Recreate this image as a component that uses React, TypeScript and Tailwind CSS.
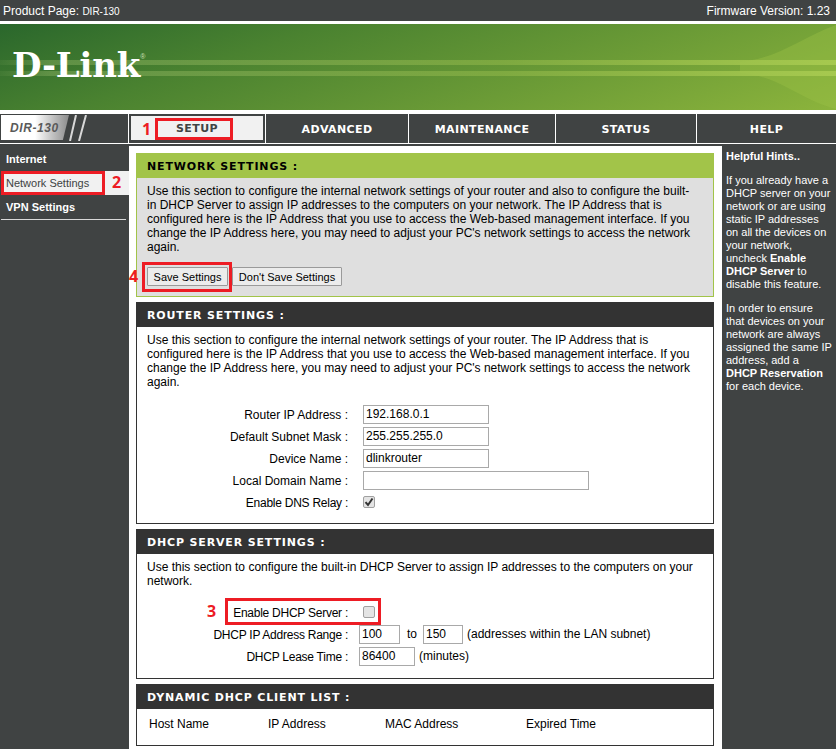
const bodyFont = "font-['Liberation_Sans',sans-serif] text-[12px] leading-[14px]"
const headFont = "font-['DejaVu_Sans',sans-serif] font-bold text-[11px] tracking-[0.85px]"
const navFont = "font-['DejaVu_Sans',sans-serif] font-bold text-[11px] tracking-[0.4px]"

function Banner() {
  return (
    <svg className="block w-full h-[86px]" viewBox="0 0 836 86" preserveAspectRatio="none">
      <defs>
        <linearGradient id="bg" x1="0" y1="0" x2="109" y2="328" gradientUnits="userSpaceOnUse">
          <stop offset="0" stopColor="#2a672c" />
          <stop offset="0.3" stopColor="#4a8230" />
          <stop offset="1" stopColor="#8cb43c" />
        </linearGradient>
        <linearGradient id="stripe" x1="0" y1="0" x2="836" y2="0" gradientUnits="userSpaceOnUse">
          <stop offset="0" stopColor="#8bb163" stopOpacity="0.1" />
          <stop offset="0.06" stopColor="#8bb163" stopOpacity="0.45" />
          <stop offset="0.6" stopColor="#8fb648" stopOpacity="0.6" />
          <stop offset="1" stopColor="#a6c94f" />
        </linearGradient>
      </defs>
      <rect width="836" height="86" fill="url(#bg)" />
      <path d="M740 38 C780 34 800 14 836 1 L836 85 C800 76 780 52 740 49 Z" fill="#9bc046" opacity="0.4" />
      <rect y="36" width="836" height="5" fill="url(#stripe)" />
      <rect y="47" width="836" height="5" fill="url(#stripe)" />
    </svg>
  )
}

function Logo() {
  return (
    <div className="absolute left-[12px] top-[21px] font-['DejaVu_Serif',serif] font-bold text-[34px] leading-[40px] text-white tracking-[-0.2px] flex">
      D-Link
      <span className="text-[7px] leading-[10px] mt-[7px] text-[#cfe0b8] font-['Liberation_Sans',sans-serif] font-normal tracking-normal">®</span>
    </div>
  )
}

function NavCell({ w, label }: { w: string; label: string }) {
  return (
    <div className={`${w} h-full pt-[3px] flex items-center justify-center border-l border-white text-white ${navFont}`}>
      {label}
    </div>
  )
}

function Panel({ title, children }: { title: string; children: React.ReactNode }) {
  return (
    <section className="h-full border border-[#333] bg-white">
      <h2 className={`h-[24px] bg-[#333] text-white pl-[10px] pt-[3px] flex items-center ${headFont}`}>{title}</h2>
      {children}
    </section>
  )
}

function Row({ label, tight, children }: { label: string; tight?: boolean; children: React.ReactNode }) {
  return (
    <div className="h-[22px] flex items-center">
      <span className={`w-[211px] pt-[1px] text-right text-[#000] whitespace-nowrap ${bodyFont} ${tight ? 'tracking-[-0.25px]' : ''}`}>{label}</span>
      <div className={`ml-[15px] flex items-center ${bodyFont}`}>{children}</div>
    </div>
  )
}

function Field({ value, w }: { value?: string; w: string }) {
  return (
    <input
      readOnly
      value={value ?? ''}
      className={`${w} h-[19px] border border-[#a9a9a9] bg-white px-[2px] text-[#000] outline-none ${bodyFont}`}
    />
  )
}

function Check({ checked }: { checked?: boolean }) {
  return (
    <span className="w-[12px] h-[12px] rounded-[2px] border border-[#a0a0a0] bg-[#e4e4e4] flex items-center justify-center">
      {checked && (
        <svg width="10" height="10" viewBox="0 0 10 10">
          <path d="M1.5 5.2 L4 8 L8.5 1.5" fill="none" stroke="#333" strokeWidth="2" />
        </svg>
      )}
    </span>
  )
}

function Button({ children, w }: { children: React.ReactNode; w: string }) {
  return (
    <button className={`${w} h-[19px] border border-[#9a9a9a] rounded-[1px] bg-[#ececec] text-[#000] text-center whitespace-nowrap font-['Liberation_Sans',sans-serif] text-[11px] leading-[14px]`}>
      {children}
    </button>
  )
}

export default function App() {
  return (
    <div className="relative w-[836px] h-[749px] overflow-hidden bg-white">
      {/* top bar */}
      <div className="h-[21px] bg-[#404343] text-white flex items-center justify-between pl-[3px] pr-[6px] font-['Liberation_Sans',sans-serif] text-[12px]">
        <span>
          Product Page: <span className="text-[10px]">DIR-130</span>
        </span>
        <span>Firmware Version: 1.23</span>
      </div>

      <div className="relative mt-[3px] h-[86px]">
        <Banner />
        <Logo />
      </div>

      {/* nav */}
      <nav className="mt-[4px] h-[29px] bg-[#404343] flex">
        <div className="relative w-[129px] h-full overflow-hidden border-r border-white">
          <div className="absolute left-[1px] top-[1px] h-[25px] w-[68px] bg-gradient-to-r from-white from-50% to-[#8c8c8c] [clip-path:polygon(0_0,100%_0,91%_100%,0_100%)] flex items-center pl-[9px] font-['Liberation_Sans',sans-serif] font-bold italic text-[12px] tracking-[0.6px] text-[#5a5a5a]">
            DIR-130
          </div>
          <svg className="absolute left-[68px] top-[1px]" width="22" height="26" viewBox="0 0 22 26">
            <path d="M8 0 L2 26 M18 0 L11 26" stroke="#d8d8d8" strokeWidth="2" />
          </svg>
        </div>
        <div className="w-[136px] h-full pt-[2px] px-[2px] pb-[3px]">
          <div className={`h-full bg-[#f1f1f1] text-[#404343] flex items-center justify-center pt-[3px] ${navFont}`}>
            SETUP
          </div>
        </div>
        <NavCell w="w-[143px]" label="ADVANCED" />
        <NavCell w="w-[147px]" label="MAINTENANCE" />
        <NavCell w="w-[141px]" label="STATUS" />
        <NavCell w="w-[140px]" label="HELP" />
      </nav>
      <div className="h-px bg-white" />
      <div className="h-[2px] bg-[#404343]" />

      <div className="flex h-[603px]">
        {/* left menu */}
        <aside className="w-[129px] shrink-0 bg-[#404343] text-white font-['Liberation_Sans',sans-serif] text-[11px] font-bold">
          <div className="pl-[6px] pt-[1px] h-[25px] flex items-center">Internet</div>
          <div className="pl-[5px] h-[24px] ml-[1px] bg-[#f1f1f1] text-[#404343] font-normal flex items-center">Network Settings</div>
          <div className="pl-[6px] h-[24px] flex items-center">VPN Settings</div>
          <div className="ml-[1px] mr-[3px] h-px bg-white/80" />
        </aside>

        {/* main */}
        <main className="w-[593px] shrink-0 bg-white pl-[7px] pr-[8px] pt-[7px] flex flex-col gap-[5px] text-[#000]">
          <section className="h-[144px] border border-[#a2c449] bg-[#dfdfdf]">
            <h1 className={`h-[24px] bg-[#a2c449] text-black pl-[10px] pt-[3px] flex items-center ${headFont}`}>NETWORK SETTINGS :</h1>
            <p className={`px-[10px] pt-[6px] whitespace-nowrap ${bodyFont}`}>
              Use this section to configure the internal network settings of your router and also to configure the built-<br />
              in DHCP Server to assign IP addresses to the computers on your network. The IP Address that is<br />
              configured here is the IP Address that you use to access the Web-based management interface. If you<br />
              change the IP Address here, you may need to adjust your PC's network settings to access the network<br />
              again.
            </p>
            <div className="pl-[10px] pt-[13px] flex gap-[4px]">
              <Button w="w-[81px]">Save Settings</Button>
              <Button w="w-[110px]">Don't Save Settings</Button>
            </div>
          </section>

          <div className="h-[222px]">
            <Panel title="ROUTER SETTINGS :">
              <p className={`px-[10px] pt-[6px] whitespace-nowrap ${bodyFont}`}>
                Use this section to configure the internal network settings of your router. The IP Address that is<br />
                configured here is the IP Address that you use to access the Web-based management interface. If you<br />
                change the IP Address here, you may need to adjust your PC's network settings to access the network<br />
                again.
              </p>
              <div className="pt-[14px]">
                <Row label="Router IP Address :"><Field w="w-[126px]" value="192.168.0.1" /></Row>
                <Row label="Default Subnet Mask :"><Field w="w-[126px]" value="255.255.255.0" /></Row>
                <Row label="Device Name :"><Field w="w-[126px]" value="dlinkrouter" /></Row>
                <Row label="Local Domain Name :"><Field w="w-[226px]" /></Row>
                <Row label="Enable DNS Relay :" tight><Check checked /></Row>
              </div>
            </Panel>
          </div>

          <div className="h-[150px]">
            <Panel title="DHCP SERVER SETTINGS :">
              <p className={`px-[10px] pt-[6px] whitespace-nowrap ${bodyFont}`}>
                Use this section to configure the built-in DHCP Server to assign IP addresses to the computers on your<br />
                network.
              </p>
              <div className="pt-[13px]">
                <Row label="Enable DHCP Server :" tight><Check /></Row>
                <Row label="DHCP IP Address Range :" tight>
                  <Field w="w-[41px] -ml-[4px]" value="100" />
                  <span className="ml-[7px] w-[16px]">to</span>
                  <Field w="w-[40px]" value="150" />
                  <span className="ml-[4px] whitespace-nowrap">(addresses within the LAN subnet)</span>
                </Row>
                <Row label="DHCP Lease Time :" tight>
                  <Field w="w-[56px] -ml-[4px]" value="86400" />
                  <span className="ml-[4px]">(minutes)</span>
                </Row>
              </div>
            </Panel>
          </div>

          <div className="h-[62px]">
            <Panel title="DYNAMIC DHCP CLIENT LIST :">
              <div className={`pl-[12px] pt-[8px] flex ${bodyFont}`}>
                <span className="w-[119px]">Host Name</span>
                <span className="w-[117px]">IP Address</span>
                <span className="w-[141px]">MAC Address</span>
                <span>Expired Time</span>
              </div>
            </Panel>
          </div>
        </main>

        {/* hints */}
        <aside className="w-[114px] shrink-0 bg-[#404343] text-white pl-[4px] pt-[4px] whitespace-nowrap font-['Liberation_Sans',sans-serif] text-[11px] leading-[13px]">
          <p className="font-bold">Helpful Hints..</p>
          <p className="mt-[11px]">
            If you already have a<br />
            DHCP server on your<br />
            network or are using<br />
            static IP addresses<br />
            on all the devices on<br />
            your network,<br />
            uncheck <b>Enable</b><br />
            <b>DHCP Server</b> to<br />
            disable this feature.
          </p>
          <p className="mt-[11px]">
            In order to ensure<br />
            that devices on your<br />
            network are always<br />
            assigned the same IP<br />
            address, add a<br />
            <b>DHCP Reservation</b><br />
            for each device.
          </p>
        </aside>
      </div>

      {/* red annotations from the screenshot */}
      <div className="absolute left-[155px] top-[118px] w-[78px] h-[22px] border-[3px] border-[#ed1c24]" />
      <div className="absolute left-[1px] top-[171px] w-[104px] h-[24px] border-[3px] border-[#ed1c24]" />
      <div className="absolute left-[142px] top-[262px] w-[90px] h-[30px] border-[3px] border-[#ed1c24]" />
      <div className="absolute left-[225px] top-[598px] w-[156px] h-[27px] border-[3px] border-[#ed1c24]" />
      <span className="absolute left-[142px] top-[119px] font-['Open_Sans',sans-serif] font-bold text-[16px] leading-[20px] text-[#ed1c24]">1</span>
      <span className="absolute left-[112px] top-[172px] font-['Open_Sans',sans-serif] font-bold text-[16px] leading-[20px] text-[#ed1c24]">2</span>
      <span className="absolute left-[207px] top-[601px] font-['Open_Sans',sans-serif] font-bold text-[16px] leading-[20px] text-[#ed1c24]">3</span>
      <span className="absolute left-[129px] top-[266px] font-['Open_Sans',sans-serif] font-bold text-[16px] leading-[20px] text-[#ed1c24]">4</span>
    </div>
  )
}
